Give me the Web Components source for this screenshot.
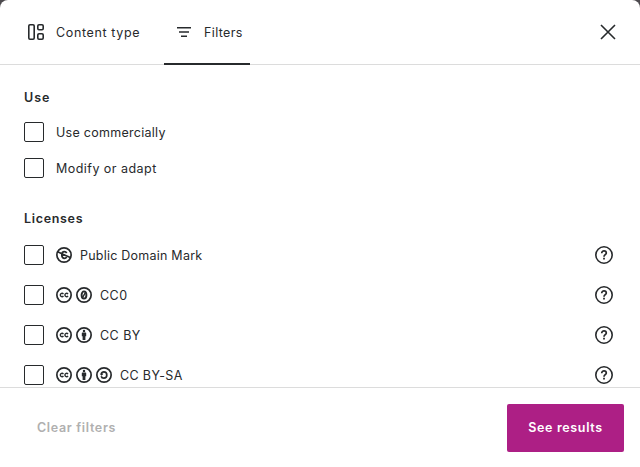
<!DOCTYPE html>
<html lang="en">
<head>
<meta charset="utf-8">
<title>Filters</title>
<style>
html,body{margin:0;height:100%;background:#4d4a4e}
body{font:400 12.5px/17px Inter,"Liberation Sans",sans-serif;color:#272a2c;letter-spacing:.27px}
.wide{letter-spacing:.63px}
.loose{letter-spacing:.46px}
.snug{letter-spacing:.36px}
</style>
</head>
<body>
<filter-modal>
  <modal-tab slot="tabs" class="wide"><ui-icon slot="icon" name="content"></ui-icon>Content type</modal-tab>
  <modal-tab slot="tabs" class="snug" selected><ui-icon slot="icon" name="filters"></ui-icon>Filters</modal-tab>
  <ui-icon slot="close" name="close"></ui-icon>
  <filter-group heading="Use" style="--heading-spacing:1px">
    <filter-option>Use commercially</filter-option>
    <filter-option class="loose">Modify or adapt</filter-option>
  </filter-group>
  <filter-group heading="Licenses" roomy>
    <filter-option icons="pdm" help style="letter-spacing:.23px">Public Domain Mark</filter-option>
    <filter-option icons="cc zero" help class="loose">CC0</filter-option>
    <filter-option icons="cc by" help class="loose">CC BY</filter-option>
    <filter-option icons="cc by sa" help class="snug">CC BY-SA</filter-option>
  </filter-group>
  <action-button slot="actions" variant="plain">Clear filters</action-button>
  <action-button slot="actions">See results</action-button>
</filter-modal>
<script>
const ring = '<circle cx="8" cy="8" r="7.15" fill="none" stroke="currentColor" stroke-width="1.7"/>';
const line = 'fill="none" stroke="currentColor"';
const ICONS = {
  content: [24, `<g ${line} stroke-width="1.6"><rect x="4.8" y="4.8" width="5.4" height="14.4" rx="1.2"/><rect x="13.8" y="4.8" width="5.4" height="4.9" rx="1.2"/><rect x="13.8" y="13.8" width="5.4" height="5.4" rx="1.2"/></g>`],
  filters: [24, '<path d="M5 7h14v1.5H5zM7 11.25h10v1.5H7zM9 15.5h6v1.5H9z" fill="currentColor"/>'],
  close: [24, `<path d="M5 5l14 14M19 5L5 19" ${line} stroke-width="1.6"/>`],
  help: [24, `<circle cx="12" cy="12" r="8.2" ${line} stroke-width="1.6"/><path d="M9.7 10.2c0-1.4 1-2.3 2.3-2.3s2.3.9 2.3 2.1c0 1.6-2.3 1.8-2.3 3.7" ${line} stroke-width="1.7"/><path d="M11.1 14.8h1.8v1.8h-1.8z" fill="currentColor"/>`],
  cc: [16, ring + `<path d="M7.45 7A1.75 1.6 0 1 0 7.45 9M12.05 7A1.75 1.6 0 1 0 12.05 9" ${line} stroke-width="1.35"/>`],
  zero: [16, ring + `<ellipse cx="8" cy="8" rx="2.4" ry="3.6" ${line} stroke-width="1.9"/><path d="M9.6 5.2L6.4 10.8" ${line} stroke-width="1.4"/>`],
  by: [16, ring + '<circle cx="8" cy="3.9" r="1.25" fill="currentColor"/><path d="M6.4 5.4h3.2q.6 0 .6.6v3.2h-.8V13H6.6V9.2h-.8V6q0-.6.6-.6z" fill="currentColor"/>'],
  sa: [16, ring + `<path d="M5.3 7C5.6 5.5 6.6 4.8 7.8 4.8c1.8 0 3 1.4 3 3.2s-1.2 3.2-3 3.2c-1.4 0-2.3-.8-2.6-2" ${line} stroke-width="1.7"/><path d="M3.7 6.7h3.8L5.6 8.8z" fill="currentColor"/>`],
  pdm: [16, ring + `<path d="M10.7 6.2C10.2 5.1 9.4 4.7 8.4 4.7 6.8 4.7 5.8 5.9 5.8 8s1 3.3 2.6 3.3c1 0 1.8-.5 2.3-1.5" ${line} stroke-width="1.7"/><path d="M1.6 4.8L14.3 10.6" ${line} stroke-width="1.6"/><path d="M5 8.4h4.2" ${line} stroke-width="1.1"/>`]
};
function define(name, render) {
  customElements.define(name, class extends HTMLElement {
    connectedCallback() {
      if (!this.shadowRoot) this.attachShadow({mode: 'open'}).innerHTML = render(this);
    }
  });
}
define('ui-icon', el => {
  const [size, art] = ICONS[el.getAttribute('name')];
  return `<style>:host{display:block;flex:none;width:${size}px;height:${size}px}svg{display:block}</style>
    <svg width="${size}" height="${size}" viewBox="0 0 ${size} ${size}" aria-hidden="true">${art}</svg>`;
});
define('modal-tab', () => `<style>
  :host{display:flex;align-items:center;gap:8px;height:65px;box-sizing:border-box;width:86px;white-space:nowrap;padding:1px 8px 0;border-bottom:2px solid transparent}
  :host(:not([selected])){width:132px}
  :host([selected]){border-color:#272a2c}
  </style><slot name="icon"></slot><slot></slot>`);
define('filter-option', el => {
  const icons = (el.getAttribute('icons') || '').split(' ').filter(Boolean);
  return `<style>
  :host{display:flex;align-items:center;height:20px}
  .box{box-sizing:border-box;width:20px;height:20px;border:1px solid #272a2c;border-radius:2px;margin-right:12px;flex:none}
  .icons{display:flex;gap:4px;margin-right:8px}
  .help{margin-left:auto}
  </style><span class="box" role="checkbox" aria-checked="false"></span>
  ${icons.length ? `<span class="icons">${icons.map(i => `<ui-icon name="${i}"></ui-icon>`).join('')}</span>` : ''}
  <slot></slot>${el.hasAttribute('help') ? '<ui-icon class="help" name="help"></ui-icon>' : ''}`;
});
define('filter-group', el => `<style>
  :host{display:block}
  h2{font:inherit;font-weight:600;letter-spacing:var(--heading-spacing,.68px);margin:0 0 16px}
  .items{display:grid;gap:16px}
  :host([roomy]) h2{margin-bottom:18px}
  :host([roomy]) .items{gap:20px}
  </style><h2>${el.getAttribute('heading')}</h2><div class="items"><slot></slot></div>`);
define('action-button', () => `<style>
  :host{display:flex;align-items:center;justify-content:center;box-sizing:border-box;height:48px;width:117px;border-radius:2px;background:#ad1f85;color:#fff;font-weight:600;letter-spacing:.67px}
  :host([variant=plain]){background:none;color:#b0b0b0;width:121px}
  </style><slot></slot>`);
define('filter-modal', () => `<style>
  :host{display:flex;flex-direction:column;height:467px;background:#fff;border-radius:8px 8px 0 0;overflow:hidden}
  header{display:flex;align-items:center;gap:16px;height:65px;box-sizing:border-box;padding:0 20px 0 16px;box-shadow:inset 0 -1px #dcdcdc;flex:none}
  slot[name=close]::slotted(*){margin:0 0 1px auto}
  main{flex:1;min-height:0;overflow:hidden;display:grid;gap:32px;align-content:start;padding:24px 24px 0}
  footer{flex:none;display:flex;justify-content:space-between;align-items:center;box-sizing:border-box;height:80px;border-top:1px solid #dcdcdc;padding:0 16px}
  </style>
  <header><slot name="tabs"></slot><slot name="close"></slot></header>
  <main><slot></slot></main>
  <footer><slot name="actions"></slot></footer>`);
</script>
</body>
</html>
